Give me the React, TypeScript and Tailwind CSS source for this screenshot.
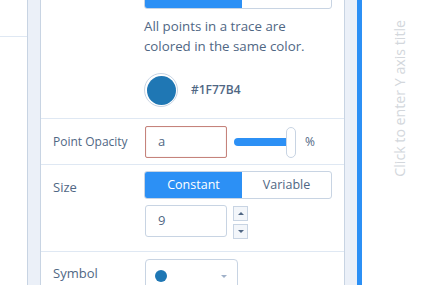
export default function App() {
  const font = { fontFamily: '"Open Sans", "Liberation Sans", sans-serif' };
  return (
    <div className="flex h-[285px] w-[423px] overflow-hidden bg-white text-[#506784]" style={font}>
      {/* left edge */}
      <div className="w-[27px] shrink-0">
        <div className="h-[37px] border-b border-[#dfe8f3]" />
      </div>
      <div className="w-[14px] shrink-0 border-x border-[#c8d4e3] bg-[#ebf0f8]" />

      {/* panel */}
      <div className="flex w-[304px] shrink-0 flex-col border-r border-[#c8d4e3]">
        <div className="border-b border-[#dfe8f3] pb-[11px] pl-[103px]">
          <div className="mt-[-19px] flex h-[28px] w-[188px] overflow-hidden rounded-[3px] border border-[#c8d4e3] text-[12.5px]">
            <div className="flex w-[97px] items-center justify-center bg-[#2c90f5] text-white">Constant</div>
            <div className="flex flex-1 items-center justify-center">Variable</div>
          </div>
          <p className="mt-[7px] text-[13.3px] leading-[20px]">
            All points in a trace are
            <br />
            colored in the same color.
          </p>
          <div className="mt-[17px] flex items-center gap-[13px]">
            <div className="flex h-[34px] w-[34px] items-center justify-center rounded-full border border-[#c8d4e3] bg-white">
              <div className="h-[29px] w-[29px] rounded-full bg-[#1F77B4]" />
            </div>
            <span className="text-[12px] font-semibold">#1F77B4</span>
          </div>
        </div>

        <div className="flex items-center border-b border-[#dfe8f3] pb-[6px] pt-[7px]">
          <div className="w-[104px] pl-[12px] text-[12px]">Point Opacity</div>
          <div className="flex h-[32px] w-[82px] items-center rounded-[2px] border border-[#c5837c] pl-[12px] text-[13px] shadow-[inset_0_0_1px_#d8a8a2]">
            a
          </div>
          <div className="ml-[7px] flex items-center">
            <div className="h-[8px] w-[52px] rounded-l-full bg-[#2c90f5]" />
            <div className="h-[31px] w-[10px] rounded-[5px] border border-[#c8d4e3] bg-white" />
            <div className="h-[8px] w-[2px]" />
          </div>
          <span className="ml-[7px] text-[12px]">%</span>
        </div>

        <div className="flex border-b border-[#dfe8f3] pb-[12px] pt-[6px]">
          <div className="w-[103px] pl-[12px] pt-[7px] text-[13px]">Size</div>
          <div className="flex flex-col gap-[6px]">
            <div className="flex h-[28px] w-[188px] overflow-hidden rounded-[3px] border border-[#c8d4e3] text-[12.5px]">
              <div className="flex w-[97px] items-center justify-center bg-[#2c90f5] text-white">Constant</div>
              <div className="flex flex-1 items-center justify-center">Variable</div>
            </div>
            <div className="flex items-start gap-[6px] pl-[1px]">
              <div className="flex h-[32px] w-[82px] items-center rounded-[3px] border border-[#c8d4e3] pl-[12px] text-[13px]">
                9
              </div>
              <div className="flex flex-col gap-[3px] pt-[1px]">
                <div className="flex h-[15px] w-[15px] items-center justify-center border border-[#c8d4e3] bg-[#f3f6fa]">
                  <div className="h-0 w-0 border-x-[3px] border-b-[3px] border-x-transparent border-b-[#506784]" />
                </div>
                <div className="flex h-[15px] w-[15px] items-center justify-center border border-[#c8d4e3] bg-[#f3f6fa]">
                  <div className="h-0 w-0 border-x-[3px] border-t-[3px] border-x-transparent border-t-[#506784]" />
                </div>
              </div>
            </div>
          </div>
        </div>

        <div className="flex pt-[7px]">
          <div className="w-[104px] pl-[12px] pt-[5px] text-[13px]">Symbol</div>
          <div className="flex h-[34px] w-[93px] items-center justify-between rounded-[4px] border border-[#c8d4e3] pl-[9px] pr-[10px]">
            <div className="h-[12px] w-[12px] rounded-full bg-[#1F77B4]" />
            <div className="h-0 w-0 border-x-[3px] border-t-[3px] border-x-transparent border-t-[#a0b1c9]" />
          </div>
        </div>
      </div>

      {/* right strip */}
      <div className="w-[12px] shrink-0 bg-[#ebf0f8]" />
      <div className="w-[5px] shrink-0 bg-[#2c90f5]" />

      <div className="flex flex-1 items-start justify-center pl-[15px] pt-[20px]">
        <div className="rotate-180 whitespace-nowrap text-[14.2px] leading-[16px] text-[#d3d7dc] [writing-mode:vertical-rl]">
          Click to enter Y axis title
        </div>
      </div>
    </div>
  );
}
